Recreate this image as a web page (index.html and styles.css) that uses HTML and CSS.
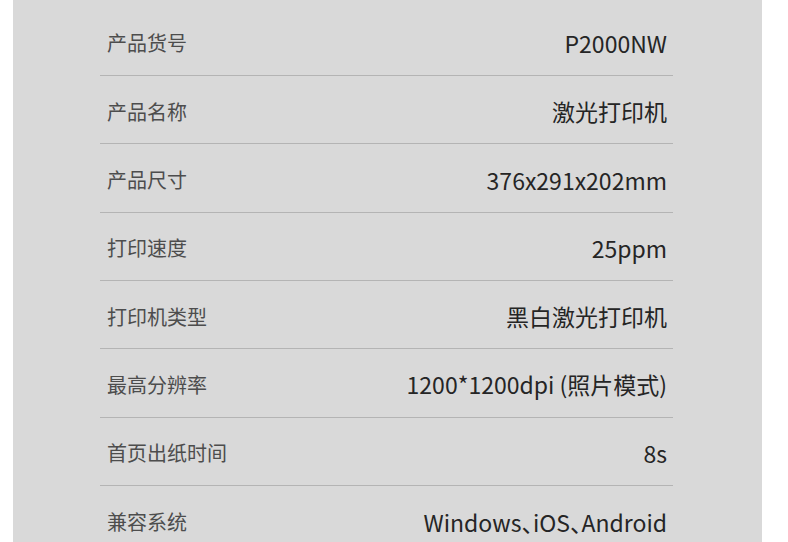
FILE: index.html
```html
<!DOCTYPE html>
<html lang="zh-CN">
<head>
    <meta charset="UTF-8">
    <title>产品参数</title>
    <link rel="stylesheet" href="styles.css">
</head>
<body>
    <div class="panel">
        <div class="spec-table">
            <div class="spec-row"><span class="label">产品货号</span><span class="value">P2000NW</span></div>
            <div class="spec-row"><span class="label">产品名称</span><span class="value">激光打印机</span></div>
            <div class="spec-row"><span class="label">产品尺寸</span><span class="value">376x291x202mm</span></div>
            <div class="spec-row"><span class="label">打印速度</span><span class="value">25ppm</span></div>
            <div class="spec-row"><span class="label">打印机类型</span><span class="value">黑白激光打印机</span></div>
            <div class="spec-row"><span class="label">最高分辨率</span><span class="value">1200*1200dpi (照片模式)</span></div>
            <div class="spec-row"><span class="label">首页出纸时间</span><span class="value">8s</span></div>
            <div class="spec-row last"><span class="label">兼容系统</span><span class="value">Windows、iOS、Android</span></div>
        </div>
    </div>
</body>
</html>
```

FILE: styles.css
```css
html, body {
    margin: 0;
    padding: 0;
    background: #ffffff;
}
body {
    font-family: "Noto Sans CJK SC", "Noto Sans", sans-serif;
    height: 542px;
    overflow: hidden;
}
.panel {
    margin-left: 13px;
    width: 749px;
    height: 542px;
    background: #d9d9d9;
    padding-top: 7.7px;
    box-sizing: border-box;
}
.spec-table {
    margin-left: 87px;
    width: 573px;
}
.spec-row {
    display: flex;
    justify-content: space-between;
    align-items: center;
    height: 68.33px;
    padding: 3px 6px 0 7px;
    box-sizing: border-box;
    border-bottom: 1px solid #b4b4b4;
}
.spec-row.last {
    border-bottom: none;
}
.label {
    font-size: 20px;
    color: #4d4d4d;
}
.value {
    font-size: 23px;
    color: #252525;
    font-feature-settings: "halt";
}
```
